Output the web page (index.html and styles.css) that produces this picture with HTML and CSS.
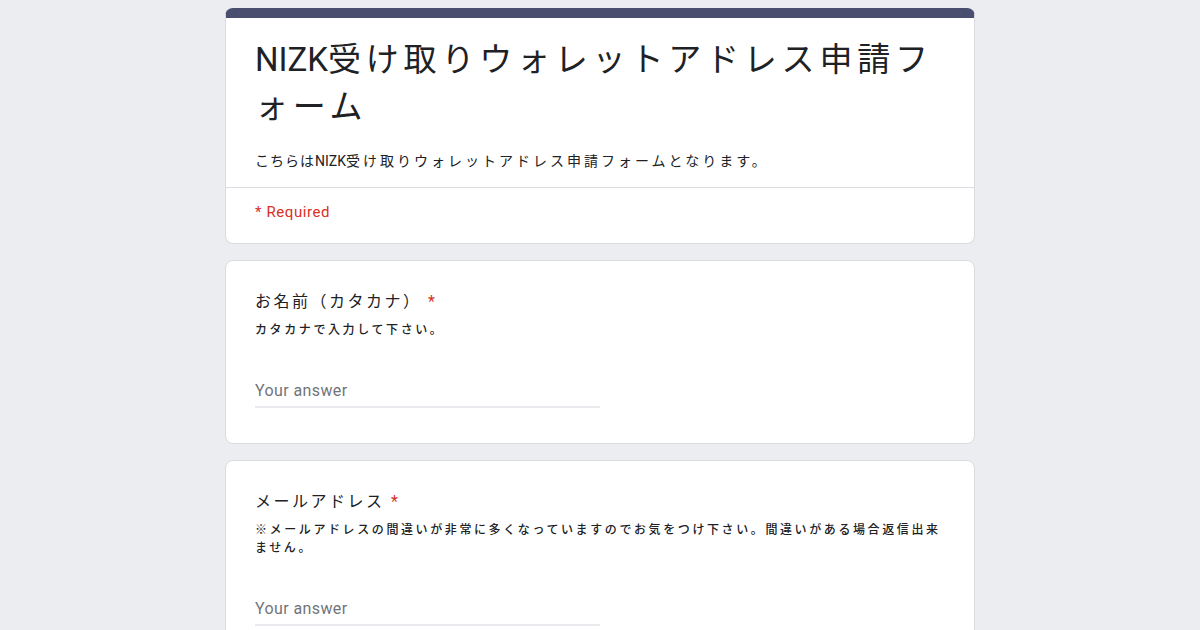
FILE: index.html
```html
<!DOCTYPE html>
<html lang="ja">
<head>
<meta charset="utf-8">
<title>NIZK受け取りウォレットアドレス申請フォーム</title>
<link rel="stylesheet" href="styles.css">
</head>
<body>
<div class="page">
  <div class="card header-card">
    <div class="header-main">
      <h1 class="form-title">NIZK<span class="ja">受け取りウォレットアドレス申請フォーム</span></h1>
      <div class="form-desc"><span class="ja-tight">こちらは</span>NIZK<span class="ja">受け取りウォレットアドレス申請フォームとなります。</span></div>
    </div>
    <div class="header-foot">
      <span class="required-note">* Required</span>
    </div>
  </div>

  <div class="card question">
    <div class="q-title">お名前（カタカナ） <span class="star">*</span></div>
    <div class="q-desc">カタカナで入力して下さい。</div>
    <div class="answer"><span class="placeholder">Your answer</span></div>
  </div>

  <div class="card question">
    <div class="q-title">メールアドレス <span class="star">*</span></div>
    <div class="q-desc">※メールアドレスの間違いが非常に多くなっていますのでお気をつけ下さい。間違いがある場合返信出来ません。</div>
    <div class="answer"><span class="placeholder">Your answer</span></div>
  </div>
</div>
</body>
</html>
```

FILE: styles.css
```css
* { box-sizing: border-box; }
html, body { margin: 0; padding: 0; }
body {
  background: #ebedf1;
  font-family: Roboto, "Noto Sans CJK JP", sans-serif;
  color: #202124;
  height: 630px;
  overflow: hidden;
}
.page {
  width: 750px;
  margin: 8px auto 0;
  display: flex;
  flex-direction: column;
  gap: 16px;
}
.card {
  background: #fff;
  border: 1px solid #dadce0;
  border-radius: 8px;
}
.header-card {
  border-top: 10px solid #4b4f6f;
}
.header-main {
  padding: 18px 29px 16px;
  border-bottom: 1px solid #dadce0;
}
.form-title {
  margin: 0;
  font-size: 33px;
  font-weight: 400;
  line-height: 47px;
  color: #202124;
}
.form-title .ja {
  letter-spacing: 4.8px;
}
.form-desc {
  margin-top: 21px;
  font-size: 14px;
  line-height: 20px;
}
.form-desc .ja-tight {
  letter-spacing: 1px;
}
.form-desc .ja {
  letter-spacing: 3px;
}
.header-foot {
  padding: 14px 29px 21px;
}
.required-note {
  color: #d93025;
  font-size: 15px;
  line-height: 20px;
  letter-spacing: .6px;
}
.question {
  padding: 29px 29px 35px;
}
.q-title {
  font-size: 16px;
  line-height: 24px;
  letter-spacing: 2.5px;
}
.star { color: #d93025; letter-spacing: 0; }
.q-desc {
  margin-top: 7px;
  font-size: 12px;
  line-height: 18px;
  letter-spacing: 2.6px;
  font-weight: 500;
}
.answer {
  margin-top: 40px;
  width: 345px;
  border-bottom: 2px solid #e8eaed;
  padding-bottom: 3px;
}
.placeholder {
  font-size: 16px;
  line-height: 24px;
  color: #70757a;
  letter-spacing: .4px;
}
```
